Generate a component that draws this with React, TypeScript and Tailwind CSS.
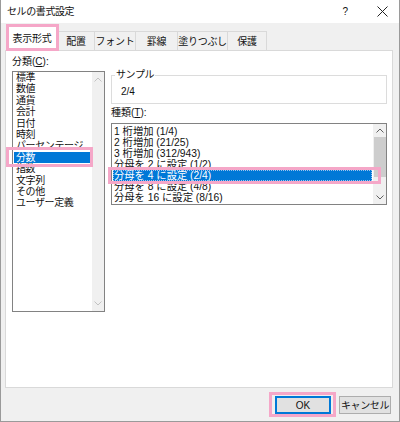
import React from "react";

const categories = [
  "標準",
  "数値",
  "通貨",
  "会計",
  "日付",
  "時刻",
  "パーセンテージ",
  "分数",
  "指数",
  "文字列",
  "その他",
  "ユーザー定義",
];

const types = [
  "1 桁増加 (1/4)",
  "2 桁増加 (21/25)",
  "3 桁増加 (312/943)",
  "分母を 2 に設定 (1/2)",
  "分母を 4 に設定 (2/4)",
  "分母を 8 に設定 (4/8)",
  "分母を 16 に設定 (8/16)",
];

const tabs = ["配置", "フォント", "罫線", "塗りつぶし", "保護"];
const tabWidths = ["w-[37px]", "w-[41px]", "w-[42px]", "w-[50px]", "w-[39px]"];

const Chevron = ({ up, color }: { up?: boolean; color: string }) => (
  <svg width="8" height="5" viewBox="0 0 8 5">
    <polyline
      points={up ? "0.5,4.5 4,1 7.5,4.5" : "0.5,0.5 4,4 7.5,0.5"}
      fill="none"
      stroke={color}
      strokeWidth="1"
    />
  </svg>
);

export default function App() {
  return (
    <div className="relative w-[400px] h-[422px] bg-[#f0f0f0] border-x border-b border-[#9a9a9a] text-[#111] text-[10px] overflow-hidden font-['Liberation_Sans','Noto_Sans_CJK_JP',sans-serif] [font-feature-settings:&quot;palt&quot;_1] [font-kerning:normal]">
      {/* title bar */}
      <div className="h-[23px] bg-white flex items-center pl-[6px]">
        <span className="tracking-[-0.4px]">セルの書式設定</span>
        <span className="ml-auto mr-[29px]">?</span>
        <svg width="11" height="11" viewBox="0 0 11 11" className="mr-[11px]">
          <line x1="0.5" y1="0.5" x2="10.5" y2="10.5" stroke="#222" strokeWidth="1" />
          <line x1="10.5" y1="0.5" x2="0.5" y2="10.5" stroke="#222" strokeWidth="1" />
        </svg>
      </div>

      {/* tabs */}
      <div className="h-[27px] flex items-end pl-[5px] tracking-[-0.3px]">
        <div className="relative z-10 w-[52px] h-[25px] -mb-px bg-white border-x border-t border-[#d9d9d9] flex items-center justify-center pb-[2px]">
          表示形式
        </div>
        {tabs.map((t, i) => (
          <div
            key={t}
            className={`${tabWidths[i]} h-[19px] border-t border-r border-[#d9d9d9] bg-[#f0f0f0] flex items-center justify-center`}
          >
            {t}
          </div>
        ))}
      </div>

      {/* panel */}
      <div className="mx-[4px] w-[388px] h-[338px] bg-white border border-[#d9d9d9] flex gap-[6px] pl-[6px] pt-[5px]">
        <div className="flex flex-col w-[93px]">
          <div className="h-[14px] leading-[12px]">
            分類(<span className="underline">C</span>):
          </div>
          <div className="mt-[1px] h-[241px] border border-[#828282] flex tracking-[-0.4px]">
            <div className="flex-1">
              {categories.map((c) => (
                <div
                  key={c}
                  className={
                    c === "分数"
                      ? "h-[11.4px] leading-[11.4px] mx-[1px] bg-[#0078d7] text-white pl-[2px] whitespace-nowrap"
                      : "h-[11.4px] leading-[11.4px] pl-[3px] whitespace-nowrap"
                  }
                >
                  {c}
                </div>
              ))}
            </div>
            <div className="w-[12px] bg-[#f0f0f0] flex flex-col items-center justify-between py-[5px]">
              <Chevron up color="#c2c2c2" />
              <Chevron color="#c2c2c2" />
            </div>
          </div>
        </div>

        <div className="flex flex-col w-[276px]">
          <fieldset className="mt-[13px] h-[35px] border border-[#dcdcdc] pl-[9px]">
            <legend className="ml-[-6px] px-[1px] leading-[12px] tracking-[-0.4px]">サンプル</legend>
            <div className="leading-[12px] mt-[5px]">2/4</div>
          </fieldset>
          <div className="mt-[2px] h-[14px] leading-[14px]">
            種類(<span className="underline">T</span>):
          </div>
          <div className="mt-[3px] h-[82px] border border-[#828282] flex">
            <div className="flex-1 pt-[1.5px] text-[10.3px]">
              {types.map((t) => (
                <div
                  key={t}
                  className={
                    t === "分母を 4 に設定 (2/4)"
                      ? "h-[11.1px] leading-[11.1px] mx-[1px] bg-[#0078d7] text-white pl-[1px] outline-1 outline-dotted outline-[#9cc3ee] -outline-offset-1 whitespace-nowrap"
                      : "h-[11.1px] leading-[11.1px] pl-[2px] whitespace-nowrap"
                  }
                >
                  {t}
                </div>
              ))}
            </div>
            <div className="w-[13px] bg-[#f0f0f0] flex flex-col items-center">
              <div className="h-[13px] flex items-center justify-center">
                <Chevron up color="#606060" />
              </div>
              <div className="w-[12px] h-[40px] bg-[#cdcdcd]" />
              <div className="mt-auto h-[13px] flex items-center justify-center">
                <Chevron color="#606060" />
              </div>
            </div>
          </div>
        </div>
      </div>

      {/* buttons */}
      <div className="flex justify-end gap-[8px] mt-[8px] mr-[8px]">
        <button className="w-[56px] h-[18px] bg-[#e1e1e1] border border-[#0078d7] shadow-[inset_0_0_0_1px_#0078d7]">
          OK
        </button>
        <button className="w-[52px] h-[18px] bg-[#e1e1e1] border border-[#adadad] tracking-[-0.4px]">
          キャンセル
        </button>
      </div>

      {/* pink annotations */}
      <div className="absolute left-[5px] top-[24px] w-[53px] h-[27px] border-[3px] border-[#f5a7c8] z-20" />
      <div className="absolute left-[5px] top-[147px] w-[87px] h-[20px] border-[3px] border-[#f5a7c8] z-20" />
      <div className="absolute left-[107px] top-[167px] w-[273px] h-[17px] border-[3px] border-[#f5a7c8] z-20" />
      <div className="absolute left-[268px] top-[392px] w-[67px] h-[25px] border-[3px] border-[#f5a7c8] z-20" />
    </div>
  );
}
